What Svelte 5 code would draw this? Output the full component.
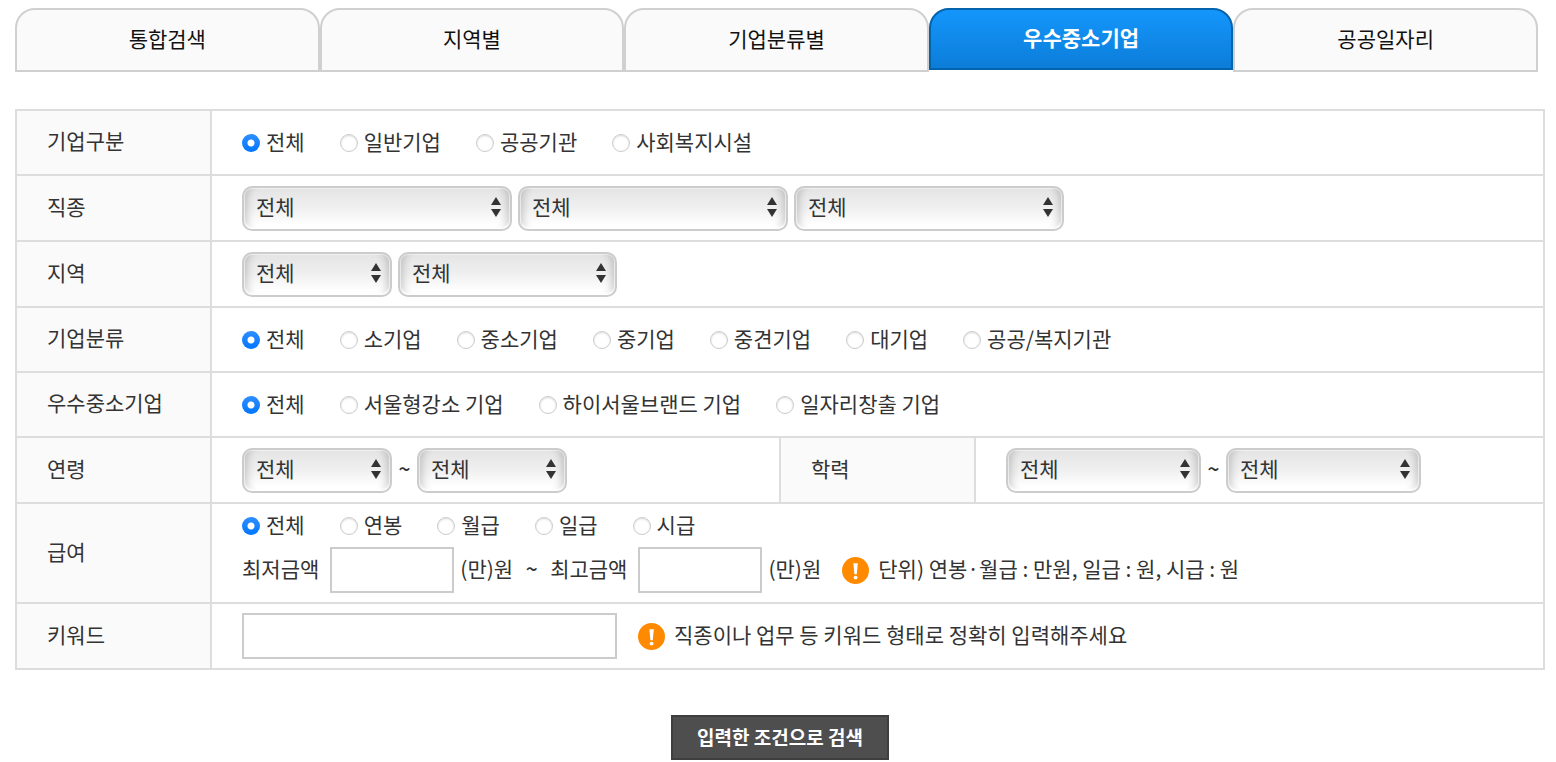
<script lang="ts">
  const tabs = ['통합검색', '지역별', '기업분류별', '우수중소기업', '공공일자리']
  let activeTab = $state('우수중소기업')

  const companyTypes = ['전체', '일반기업', '공공기관', '사회복지시설']
  const companySizes = ['전체', '소기업', '중소기업', '중기업', '중견기업', '대기업', '공공/복지기관']
  const excellence = ['전체', '서울형강소 기업', '하이서울브랜드 기업', '일자리창출 기업']
  const payTypes = ['전체', '연봉', '월급', '일급', '시급']

  // State: form inputs
  let companyType = $state('전체')
  let companySize = $state('전체')
  let excellent = $state('전체')
  let payType = $state('전체')
  let minPay = $state('')
  let maxPay = $state('')
  let keyword = $state('')
</script>

{#snippet choices(name: string, options: string[], current: string, pick: (v: string) => void)}
  <div class="choices" role="radiogroup" aria-label={name}>
    {#each options as option (option)}
      <label>
        <input
          type="radio"
          {name}
          value={option}
          checked={option === current}
          onchange={() => pick(option)}
        />
        <span class="text">{option}</span>
      </label>
    {/each}
  </div>
{/snippet}

{#snippet picker(label: string, size: string)}
  <select class={size} aria-label={label}>
    <option>전체</option>
  </select>
{/snippet}

{#snippet notice()}
  <svg class="notice" viewBox="0 0 27 27" aria-hidden="true">
    <circle cx="13.5" cy="13.5" r="13.5" fill="#ff8a00" />
    <path d="M11.4 6.2h4.4l-1 11h-2.4z" fill="#fff" />
    <circle cx="13.6" cy="20.6" r="1.9" fill="#fff" />
  </svg>
{/snippet}

<main>
  <nav>
    {#each tabs as tab (tab)}
      <a
        href="#search"
        class:active={tab === activeTab}
        aria-current={tab === activeTab ? 'page' : undefined}
        onclick={() => (activeTab = tab)}>{tab}</a
      >
    {/each}
  </nav>

  <form id="search" onsubmit={(e) => e.preventDefault()}>
    <table>
      <colgroup>
        <col class="head" />
        <col />
        <col class="head" />
        <col />
      </colgroup>
      <tbody>
        <tr>
          <th scope="row">기업구분</th>
          <td colspan="3">
            {@render choices('기업구분', companyTypes, companyType, (v) => (companyType = v))}
          </td>
        </tr>
        <tr>
          <th scope="row">직종</th>
          <td colspan="3">
            <div class="line">
              {@render picker('직종 대분류', 'wide')}
              {@render picker('직종 중분류', 'wide')}
              {@render picker('직종 소분류', 'wide')}
            </div>
          </td>
        </tr>
        <tr>
          <th scope="row">지역</th>
          <td colspan="3">
            <div class="line">
              {@render picker('시도', 'small')}
              {@render picker('시군구', 'large')}
            </div>
          </td>
        </tr>
        <tr>
          <th scope="row">기업분류</th>
          <td colspan="3">
            {@render choices('기업분류', companySizes, companySize, (v) => (companySize = v))}
          </td>
        </tr>
        <tr>
          <th scope="row">우수중소기업</th>
          <td colspan="3">
            {@render choices('우수중소기업', excellence, excellent, (v) => (excellent = v))}
          </td>
        </tr>
        <tr>
          <th scope="row">연령</th>
          <td>
            <div class="line">
              {@render picker('최소 연령', 'small')}
              <span class="text tilde">~</span>
              {@render picker('최대 연령', 'small')}
            </div>
          </td>
          <th scope="row">학력</th>
          <td>
            <div class="line">
              {@render picker('최소 학력', 'medium')}
              <span class="text tilde">~</span>
              {@render picker('최대 학력', 'medium')}
            </div>
          </td>
        </tr>
        <tr>
          <th scope="row">급여</th>
          <td class="salary" colspan="3">
            {@render choices('급여', payTypes, payType, (v) => (payType = v))}
            <div class="line pay">
              <label class="text" for="min-pay">최저금액</label>
              <input id="min-pay" class="amount" type="text" bind:value={minPay} />
              <span class="text">(만)원</span>
              <span class="text tilde">~</span>
              <label class="text" for="max-pay">최고금액</label>
              <input id="max-pay" class="amount" type="text" bind:value={maxPay} />
              <span class="text">(만)원</span>
              {@render notice()}
              <span class="text">단위) 연봉·월급 : 만원, 일급 : 원, 시급 : 원</span>
            </div>
          </td>
        </tr>
        <tr>
          <th scope="row"><label for="keyword">키워드</label></th>
          <td colspan="3">
            <div class="line">
              <input id="keyword" class="keyword" type="text" bind:value={keyword} />
              {@render notice()}
              <span class="text">직종이나 업무 등 키워드 형태로 정확히 입력해주세요</span>
            </div>
          </td>
        </tr>
      </tbody>
    </table>

    <button type="submit">입력한 조건으로 검색</button>
  </form>
</main>

<style>
  :global(body) {
    background: #fff;
  }

  main {
    padding: 8px 11px 0 15px;
    color: #333;
    font-family: 'Noto Sans CJK KR', sans-serif;
    font-size: 21px;
    line-height: 26px;
  }

  input,
  select,
  button {
    box-sizing: border-box;
    margin: 0;
    color: inherit;
    font: inherit;
  }

  /* Tabs */
  nav {
    display: flex;
    align-items: flex-start;
    margin-right: 7px;
  }

  nav a {
    flex: 1;
    padding: 15px 0 19px;
    border: 2px solid #d0d0d0;
    border-radius: 20px 20px 0 0;
    background: #fafafa;
    color: #111;
    text-align: center;
    text-decoration: none;
  }

  nav a.active {
    padding: 14px 0 18px;
    border-color: #0463ad;
    background: linear-gradient(#1496fc, #0c7dd8);
    color: #fff;
    font-weight: 700;
  }

  /* Condition table */
  table {
    width: 100%;
    margin-top: 37px;
    border-collapse: collapse;
    table-layout: fixed;
  }

  .head {
    width: 195px;
  }

  th,
  td {
    border: 2px solid #ddd;
    text-align: left;
    vertical-align: middle;
  }

  th {
    padding: 0 0 5px 30px;
    background: #fafafa;
    font-weight: 400;
  }

  td {
    padding: 9px 0 9px 30px;
  }

  .line {
    display: flex;
    align-items: center;
    gap: 6px;
    min-height: 46px;
  }

  /* Korean glyphs sit low in their line, so the room goes below them */
  .text {
    padding-bottom: 4px;
  }

  .choices {
    display: flex;
    align-items: center;
    gap: 35px;
    min-height: 45px;
  }

  .choices label {
    display: flex;
    align-items: center;
    gap: 6px;
  }

  input[type='radio'] {
    appearance: none;
    width: 18px;
    height: 18px;
    border: 1px solid #ccc;
    border-radius: 50%;
    background: #fff;
    box-shadow: inset 0 1px 2px rgba(0, 0, 0, 0.15);
  }

  input[type='radio']:checked {
    border: none;
    background:
      radial-gradient(circle, #fff 3px, transparent 4px),
      linear-gradient(#2f8fff, #0076ff);
    box-shadow: none;
  }

  select {
    height: 45px;
    padding: 0 28px 4px 12px;
    border: 2px solid #ccc;
    border-radius: 10px;
    appearance: none;
    background:
      url("data:image/svg+xml,%3Csvg xmlns='http://www.w3.org/2000/svg' width='10' height='20'%3E%3Cpath d='M5 0l5 8H0zM0 12h10l-5 8z' fill='%23333'/%3E%3C/svg%3E")
        no-repeat right 9px top 9px,
      linear-gradient(#e4e4e4, #f0f0f0 50%, #fff 90%);
    box-shadow:
      inset 0 0 0 1px rgba(255, 255, 255, 0.5),
      inset 0 -3px 3px -1px #fff,
      inset 10px 0 8px -7px rgba(0, 0, 0, 0.2),
      inset -10px 0 8px -7px rgba(0, 0, 0, 0.2);
  }

  .small {
    width: 150px;
  }
  .medium {
    width: 195px;
  }
  .large {
    width: 219px;
  }
  .wide {
    width: 270px;
  }

  input[type='text'] {
    height: 46px;
    padding: 0 10px;
    border: 2px solid #ccc;
    background: #fff;
  }

  .amount {
    width: 124px;
  }
  .keyword {
    width: 375px;
  }

  .tilde {
    width: 13px;
    font-weight: 500;
    text-align: center;
  }

  /* Salary cell holds two lines */
  .salary {
    padding-top: 7px;
  }
  .salary .choices {
    min-height: 30px;
  }
  .pay {
    margin-top: 6px;
  }
  .pay label {
    margin-right: 5px;
  }
  .pay .tilde {
    margin: 0 6px;
  }

  .notice {
    flex: none;
    width: 27px;
    height: 27px;
    margin: 0 3px 0 15px;
  }

  button {
    display: block;
    margin: 45px auto 0;
    padding: 7px 24px 8px;
    border: 2px solid #3e3e3e;
    background: #4e4e4e;
    color: #fff;
    font-size: 19px;
    font-weight: 700;
  }
</style>
